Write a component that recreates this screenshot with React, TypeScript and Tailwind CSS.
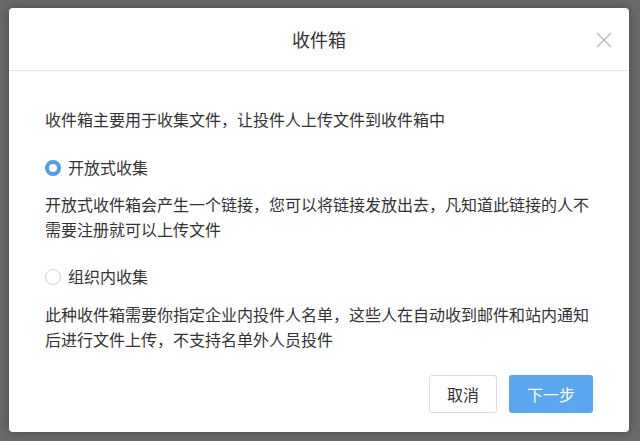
import React, { useState } from 'react';

const options = [
  {
    key: 'open',
    label: '开放式收集',
    desc: '开放式收件箱会产生一个链接，您可以将链接发放出去，凡知道此链接的人不需要注册就可以上传文件',
  },
  {
    key: 'org',
    label: '组织内收集',
    desc: '此种收件箱需要你指定企业内投件人名单，这些人在自动收到邮件和站内通知后进行文件上传，不支持名单外人员投件',
  },
];

const App: React.FC = () => {
  const [mode, setMode] = useState('open');

  return (
    <div
      className="w-full h-[441px] bg-[#6b6b6b] pt-[8px] pl-[9px] overflow-hidden"
      style={{ fontFamily: '"Noto Sans CJK SC", "Noto Sans", sans-serif' }}
    >
      <div className="w-[620px] h-[424px] bg-white rounded-[4px] shadow-[0_0_12px_rgba(0,0,0,0.35)] flex flex-col">
        {/* Header */}
        <div className="relative h-[63px] flex items-center justify-center border-b border-[#e4e4e4]">
          <h2 className="text-[18px] text-[#333] leading-none">收件箱</h2>
          <button className="absolute right-[17px] top-[24px] w-[16px] h-[16px] text-[#b8b8b8]">
            <svg viewBox="0 0 16 16" className="w-[16px] h-[16px]" fill="none" stroke="currentColor" strokeWidth="1.2">
              <path d="M1 1 L15 15 M15 1 L1 15" />
            </svg>
          </button>
        </div>

        {/* Body */}
        <div className="pl-[36px] pr-[36px] pt-[36px] text-[16px] leading-[25px] text-[#333]">
          <p>收件箱主要用于收集文件，让投件人上传文件到收件箱中</p>

          {options.map((opt, i) => (
            <div key={opt.key} className={i === 0 ? 'mt-[23px]' : 'mt-[22px]'}>
              <label className="flex items-center gap-[7px] cursor-pointer" onClick={() => setMode(opt.key)}>
                <span
                  className={
                    mode === opt.key
                      ? 'w-[16px] h-[16px] rounded-full border-[4.5px] border-[#4f9cec] bg-white'
                      : 'w-[16px] h-[16px] rounded-full border border-[#d0d0d0] bg-white'
                  }
                />
                <span>{opt.label}</span>
              </label>
              <p className={i === 0 ? 'mt-[12px] w-[558px]' : 'mt-[13px] w-[558px]'}>{opt.desc}</p>
            </div>
          ))}

          <div className="mt-[23px] flex justify-end gap-[12px]">
            <button className="w-[68px] h-[38px] rounded-[3px] border border-[#dcdcdc] bg-white text-[16px] text-[#333]">
              取消
            </button>
            <button className="w-[84px] h-[38px] rounded-[3px] bg-[#5aa6f0] text-[16px] text-white">
              下一步
            </button>
          </div>
        </div>
      </div>
    </div>
  );
};

export default App;
